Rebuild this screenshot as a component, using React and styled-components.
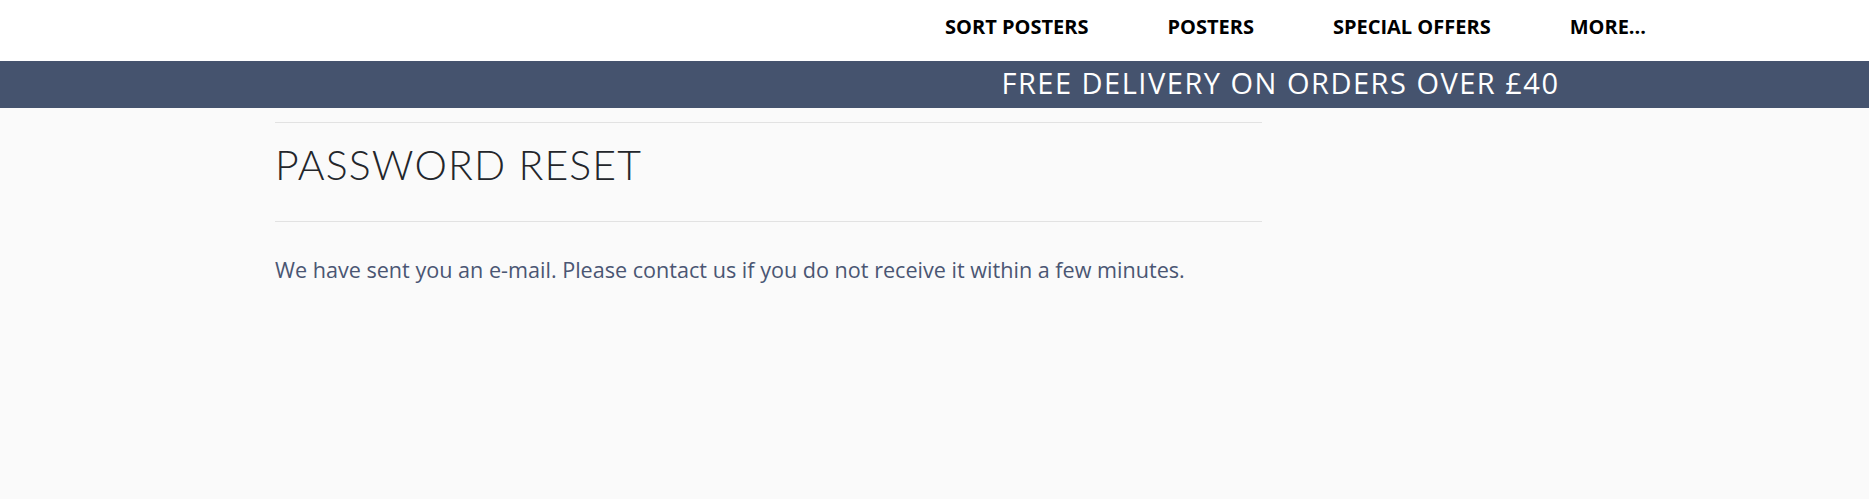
import styled, { createGlobalStyle } from "styled-components";

const GlobalStyle = createGlobalStyle`
  body {
    margin: 0;
    background: #fafafa;
    font-family: "Open Sans", "Liberation Sans", sans-serif;
  }
  * { box-sizing: border-box; }
`;

const navItems = ["SORT POSTERS", "POSTERS", "SPECIAL OFFERS", "MORE..."];

const App = () => {
  return (
    <Page>
      <GlobalStyle />
      <Header>
        <Nav>
          {navItems.map((item) => (
            <NavLink key={item} href="#">
              {item}
            </NavLink>
          ))}
        </Nav>
      </Header>
      <Banner>
        <BannerText>FREE DELIVERY ON ORDERS OVER £40</BannerText>
      </Banner>
      <Container>
        <Content>
          <TitleBlock>
            <Title>PASSWORD RESET</Title>
          </TitleBlock>
          <Message>
            We have sent you an e-mail. Please contact us if you do not receive it within a few minutes.
          </Message>
        </Content>
      </Container>
    </Page>
  );
};

export default App;

// STYLED COMPONENTS
const Page = styled.div`
  min-height: 499px;
  background: #fafafa;
`;

const Header = styled.header`
  height: 61px;
  background: #ffffff;
  display: flex;
  align-items: flex-start;
  padding-left: 945px;
`;

const Nav = styled.nav`
  display: flex;
  gap: 79px;
`;

const NavLink = styled.a`
  display: block;
  line-height: 53px;
  font-family: "Open Sans", sans-serif;
  font-weight: 700;
  font-size: 20px;
  color: #000;
  text-decoration: none;
  white-space: nowrap;
`;

const Banner = styled.div`
  height: 47px;
  background: #45536e;
  display: flex;
  justify-content: center;
  padding-left: 692px;
`;

const BannerText = styled.p`
  margin: 0;
  line-height: 44px;
  font-family: "Open Sans", sans-serif;
  font-size: 29px;
  letter-spacing: 1.5px;
  font-weight: 400;
  color: #ffffff;
  white-space: nowrap;
`;

const Container = styled.main`
  width: 1319px;
  margin: 0 auto;
  padding-top: 14px;
`;

const Content = styled.section`
  width: 987px;
`;

const TitleBlock = styled.div`
  border-top: 1px solid #e2e2e2;
  border-bottom: 1px solid #e2e2e2;
  padding: 18px 0 32px;
`;

const Title = styled.h1`
  margin: 0;
  line-height: 48px;
  font-family: Lato, "Open Sans", sans-serif;
  font-weight: 300;
  font-size: 41px;
  letter-spacing: 1.1px;
  color: #23262b;
`;

const Message = styled.p`
  margin: 33px 0 0;
  line-height: 30px;
  font-family: "Open Sans", sans-serif;
  font-size: 21.6px;
  color: #4a5673;
`;
